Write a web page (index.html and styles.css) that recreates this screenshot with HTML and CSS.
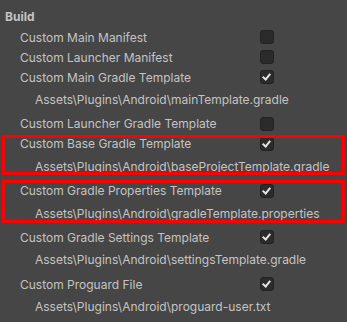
FILE: index.html
```html
<!DOCTYPE html>
<html lang="en">
<head>
    <meta charset="UTF-8">
    <meta name="viewport" content="width=device-width, initial-scale=1.0">
    <title>Build Settings</title>
    <link rel="stylesheet" href="styles.css">
</head>
<body>
    <div class="panel">
        <div class="header">Build</div>

        <div class="row">
            <span class="label">Custom Main Manifest</span>
            <span class="toggle"></span>
        </div>
        <div class="row">
            <span class="label">Custom Launcher Manifest</span>
            <span class="toggle"></span>
        </div>
        <div class="row">
            <span class="label">Custom Main Gradle Template</span>
            <span class="toggle on"></span>
        </div>
        <div class="path">Assets\Plugins\Android\mainTemplate.gradle</div>
        <div class="row">
            <span class="label">Custom Launcher Gradle Template</span>
            <span class="toggle"></span>
        </div>

        <div class="marked first">
            <div class="row">
                <span class="label">Custom Base Gradle Template</span>
                <span class="toggle on"></span>
            </div>
            <div class="path">Assets\Plugins\Android\baseProjectTemplate.gradle</div>
        </div>

        <div class="marked second">
            <div class="row">
                <span class="label">Custom Gradle Properties Template</span>
                <span class="toggle on"></span>
            </div>
            <div class="path">Assets\Plugins\Android\gradleTemplate.properties</div>
        </div>

        <div class="row">
            <span class="label">Custom Gradle Settings Template</span>
            <span class="toggle on"></span>
        </div>
        <div class="path">Assets\Plugins\Android\settingsTemplate.gradle</div>
        <div class="row">
            <span class="label">Custom Proguard File</span>
            <span class="toggle on"></span>
        </div>
        <div class="path">Assets\Plugins\Android\proguard-user.txt</div>
    </div>
</body>
</html>
```

FILE: styles.css
```css
html, body {
    margin: 0;
    padding: 0;
    background-color: #464646;
}
body {
    font-family: Inter, "Noto Sans", sans-serif;
    font-size: 12px;
    color: #c4c4c4;
    width: 347px;
    height: 322px;
    overflow: hidden;
}
.panel {
    padding-top: 7px;
}
.header {
    height: 20px;
    line-height: 20px;
    padding-left: 5px;
    font-weight: bold;
}
.row {
    display: flex;
    align-items: center;
    height: 20px;
    padding-left: 20px;
}
.label {
    width: 240px;
}
.toggle {
    box-sizing: border-box;
    width: 14px;
    height: 14px;
    background-color: #2b2b2b;
    border: 1px solid #222;
    border-radius: 3px;
    position: relative;
}
.toggle.on::after {
    content: "";
    position: absolute;
    left: 3px;
    top: 1px;
    width: 3px;
    height: 6px;
    border: solid #e4e4e4;
    border-width: 0 2px 2px 0;
    transform: rotate(40deg);
}
.path {
    height: 26.8px;
    line-height: 26.8px;
    padding-left: 35px;
}
.marked {
    position: relative;
}
.marked::after {
    content: "";
    position: absolute;
    left: 2px;
    right: 2px;
    border: 3px solid #ff0000;
}
.marked.first::after {
    top: 1px;
    bottom: 6px;
}
.marked.second::after {
    top: -1px;
    bottom: 4px;
}
```
